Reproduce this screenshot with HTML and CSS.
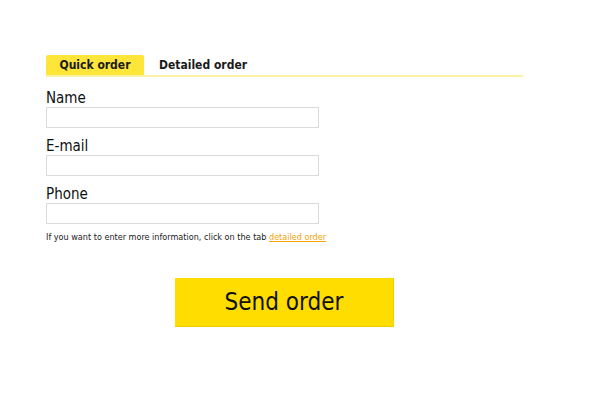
FILE: index.html
```html
<!DOCTYPE html>
<html>
<head>
<meta charset="utf-8">
<link rel="stylesheet" href="styles.css">
</head>
<body>
<div class="page">
  <div class="tabs">
    <span class="tab active">Quick order</span>
    <span class="tab">Detailed order</span>
  </div>
  <form class="form">
    <label class="field">
      <span class="label">Name</span>
      <input class="input" type="text">
    </label>
    <label class="field">
      <span class="label">E-mail</span>
      <input class="input" type="text">
    </label>
    <label class="field">
      <span class="label">Phone</span>
      <input class="input" type="text">
    </label>
    <p class="hint">If you want to enter more information, click on the tab <a href="#" class="link">detailed order</a></p>
    <div class="actions">
      <button type="button" class="send">Send order</button>
    </div>
  </form>
</div>
</body>
</html>
```

FILE: styles.css
```css
html, body {
  margin: 0;
  padding: 0;
  background: #fff;
}
body {
  font-family: "DejaVu Sans Condensed", "DejaVu Sans", sans-serif;
  color: #111;
}
.page {
  width: 477px;
  margin: 0 0 0 46px;
  padding-top: 55px;
}
.tabs {
  display: flex;
  border-bottom: 2px solid #fdf3a6;
  height: 20px;
}
.tab {
  width: 98px;
  height: 20px;
  line-height: 21px;
  text-align: center;
  font-size: 12px;
  font-weight: 600;
  color: #1a1a1a;
}
.tab.active {
  background: #fde53a;
  border-radius: 2px 2px 0 0;
}
.tab + .tab {
  width: 118px;
}
.form {
  margin: 0;
  padding-top: 13px;
}
.field {
  display: flex;
  flex-direction: column;
  margin-bottom: 10px;
}
.label {
  font-size: 15px;
  line-height: 17px;
  font-weight: 500;
}
.input {
  width: 273px;
  height: 21px;
  box-sizing: border-box;
  border: 1px solid #dcdcdc;
  margin: 0;
  padding: 0 4px;
  background: #fff;
}
.hint {
  margin: -3px 0 0;
  font-size: 9px;
  line-height: 12px;
  color: #222;
}
.link {
  color: #f0a30a;
}
.actions {
  display: flex;
  justify-content: center;
  padding-top: 35px;
}
.send {
  width: 219px;
  height: 49px;
  background: #ffdd00;
  border: none;
  border-bottom: 1px solid #f2cc00;
  border-right: 1px solid #f2cc00;
  font-family: inherit;
  font-size: 24px;
  color: #111;
  padding: 0;
  cursor: pointer;
}
```
